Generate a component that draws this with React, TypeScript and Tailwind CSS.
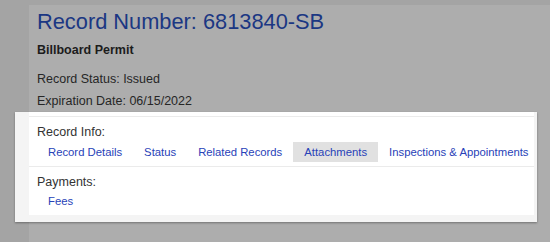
import React from 'react';

const tabs = [
  { label: 'Record Details', active: false },
  { label: 'Status', active: false },
  { label: 'Related Records', active: false },
  { label: 'Attachments', active: true },
  { label: 'Inspections & Appointments', active: false },
];

const App: React.FC = () => {
  return (
    <div className="w-[550px] h-[242px] overflow-hidden bg-[#a4a4a4] pt-[5px] font-['Liberation_Sans',Arial,sans-serif]">
      <div className="ml-[29px] h-[240px] bg-[#adadad] pt-[4px]">
        {/* Header (dimmed) */}
        <div className="pl-[8px]">
          <h1 className="text-[21.8px] leading-[26px] text-[#1b3783]">Record Number: 6813840-SB</h1>
          <p className="mt-[7px] text-[12.5px] leading-[16px] font-bold text-[#1c1c1c]">Billboard Permit</p>
          <p className="mt-[12.5px] text-[12.5px] leading-[16px] text-[#262626]">Record Status: Issued</p>
          <p className="mt-[6.7px] text-[12.5px] leading-[16px] text-[#262626]">Expiration Date: 06/15/2022</p>
        </div>

        {/* Highlighted panel */}
        <div className="relative -ml-[14px] mt-[3.3px] w-[522px] bg-[#f4f4f4] pl-[14px] pr-[3px] pb-[7px] shadow-[0_1px_2px_rgba(0,0,0,0.35)]">
          <div className="bg-white pt-[4px] overflow-hidden">
            <div className="border-t border-[#ebebeb] pl-[8px] pt-[7px] pb-[4px] border-b">
              <p className="text-[12.5px] leading-[16px] text-[#333]">Record Info:</p>
              <div className="mt-[2px] flex flex-nowrap whitespace-nowrap">
                {tabs.map((t) => (
                  <a
                    key={t.label}
                    className={`shrink-0 px-[11px] text-[11.3px] leading-[20px] text-[#2842b8] ${t.active ? 'bg-[#e1e1e1]' : ''}`}
                  >
                    {t.label}
                  </a>
                ))}
              </div>
            </div>
            <div className="pl-[8px] pt-[7px] pb-[4px]">
              <p className="text-[12.5px] leading-[16px] text-[#333]">Payments:</p>
              <div className="mt-[1px] flex">
                <a className="px-[11px] text-[11.3px] leading-[20px] text-[#2842b8]">Fees</a>
              </div>
            </div>
          </div>
        </div>
      </div>
    </div>
  );
};

export default App;
